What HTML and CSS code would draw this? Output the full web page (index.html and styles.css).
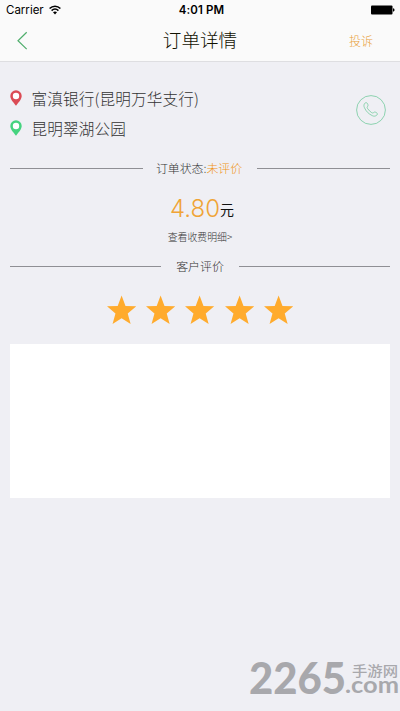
FILE: index.html
```html
<!DOCTYPE html>
<html lang="zh-CN">
<head>
<meta charset="utf-8">
<title>订单详情</title>
<link rel="stylesheet" href="styles.css">
</head>
<body>
<div class="screen">
  <header class="header">
    <div class="status">
      <div class="carrier"><span>Carrier</span>
        <svg width="12" height="10" viewBox="0 0 12 10" fill="none" stroke="#000" stroke-width="1.6"><path d="M.6 3.500C3.700.4 8.300.4 11.400 3.500M2.600 5.600c2-1.900 4.800-1.900 6.800 0"/><path d="M4 7.300c1.200-1 2.800-1 4 0L6 9.400z" fill="#000" stroke="none"/></svg>
      </div>
      <div class="clock">4:01 PM</div>
      <svg class="battery" width="24" height="10" viewBox="0 0 24 10"><rect x="0" y=".5" width="21.500" height="9" rx="1"/><path d="M22 3.300q1.600.3 1.600 1.700T22 6.700z"/></svg>
    </div>
    <nav class="nav">
      <svg class="back" width="12" height="20" viewBox="0 0 12 20" fill="none" stroke="#4fae6c" stroke-width="1.2"><path d="M9.700 1.200 1 9.700l8.700 8.400"/></svg>
      <h1 class="title">订单详情</h1>
      <span class="complain">投诉</span>
    </nav>
  </header>
  <main class="main">
    <section class="route">
      <div class="places">
        <div class="place"><svg class="pin pin-from" width="12" height="16" viewBox="0 0 12 16"><path d="M6 .3a5.700 5.700 0 0 1 5.700 5.700C11.700 9.500 8 13 6 15.700 4 13 .3 9.500.3 6A5.700 5.700 0 0 1 6 .3Z"/><circle cx="6" cy="6" r="3.200" fill="#fff"/></svg><span>富滇银行(昆明万华支行)</span></div>
        <div class="place"><svg class="pin pin-to" width="12" height="16" viewBox="0 0 12 16"><path d="M6 .3a5.700 5.700 0 0 1 5.700 5.700C11.700 9.500 8 13 6 15.700 4 13 .3 9.500.3 6A5.700 5.700 0 0 1 6 .3Z"/><circle cx="6" cy="6" r="3.200" fill="#fff"/></svg><span>昆明翠湖公园</span></div>
      </div>
      <svg class="call" width="30" height="30" viewBox="0 0 30 30" fill="none" stroke="#63c592" stroke-width=".7"><circle cx="15" cy="15" r="14.400"/><path d="M8.800 8.300c1-1 2.100-.7 2.600.2.700 1.200.9 2.200.1 3.100-.6.700-.4 1.300.2 2.100 1.200 1.700 2.200 2.700 3.800 3.800.8.600 1.500.7 2.100.1.900-.9 1.800-.6 2.900.1 1 .6 1.200 1.600.3 2.400-1.200 1.100-2.700 1.400-4.200.7-4-1.800-6.500-4.400-8.200-8.200-.7-1.500-.6-3.200.4-4.300Z"/></svg>
    </section>
    <div class="divider divider-status"><i></i><span>订单状态:<b>未评价</b></span><i></i></div>
    <div class="price"><span class="amount">4.80</span><span class="unit">元</span></div>
    <div class="detail">查看收费明细&gt;</div>
    <div class="divider divider-review"><i></i><span>客户评价</span><i></i></div>
    <div class="stars">
      <svg class="star" viewBox="0 0 30 30"><path d="M15 0l4 10.900 11 .3-8.700 7.300 3 11L15 23.400 5.700 29.500l3-11L0 11.200l11-.3z"/></svg>
      <svg class="star" viewBox="0 0 30 30"><path d="M15 0l4 10.900 11 .3-8.700 7.300 3 11L15 23.400 5.700 29.500l3-11L0 11.200l11-.3z"/></svg>
      <svg class="star" viewBox="0 0 30 30"><path d="M15 0l4 10.900 11 .3-8.700 7.300 3 11L15 23.400 5.700 29.500l3-11L0 11.200l11-.3z"/></svg>
      <svg class="star" viewBox="0 0 30 30"><path d="M15 0l4 10.900 11 .3-8.700 7.300 3 11L15 23.400 5.700 29.500l3-11L0 11.200l11-.3z"/></svg>
      <svg class="star" viewBox="0 0 30 30"><path d="M15 0l4 10.900 11 .3-8.700 7.300 3 11L15 23.400 5.700 29.500l3-11L0 11.200l11-.3z"/></svg>
    </div>
    <div class="comment"></div>
  </main>
  <svg class="mark" width="152" height="61" viewBox="0 0 152 61">
    <text class="mark-num" x="1" y="43.500" textLength="97" lengthAdjust="spacingAndGlyphs">2265</text>
    <text class="mark-cn" x="104" y="26" textLength="46" lengthAdjust="spacingAndGlyphs">手游网</text>
    <text class="mark-com" x="97" y="43" textLength="54" lengthAdjust="spacingAndGlyphs">.com</text>
  </svg>
</div>
</body>
</html>
```

FILE: styles.css
```css
* { box-sizing: border-box; }
body { margin: 0; font-family: "Noto Sans CJK SC", sans-serif; font-weight: 300; }
.screen { position: relative; width: 400px; height: 711px; overflow: hidden; background: #efeff4; color: #333; }
svg { display: block; flex: none; }

.header { height: 62px; background: #fafafa; border-bottom: 1px solid #dedee1; }
.status { display: grid; grid-template-columns: 1fr auto 1fr; align-items: center; height: 20px; padding: 0 5px 0 6px; font-family: Inter, sans-serif; font-size: 11.500px; color: #000; }
.carrier { display: flex; align-items: center; gap: 5px; font-weight: 400; }
.clock { margin-left: 2px; font-weight: 600; letter-spacing: .1px; }
.battery { justify-self: end; }
.nav { display: grid; grid-template-columns: 1fr auto 1fr; align-items: center; height: 41px; padding: 0 27px 0 17px; }
.title { margin: -4px 0 0 10px; font-size: 18.600px; line-height: 38px; font-weight: 300; color: #111100; }
.complain { justify-self: end; font-size: 12px; color: #e9a138; }

.main { padding: 0 10px; }
.route { display: flex; justify-content: space-between; align-items: center; height: 92px; padding: 4px 4px 0 0; }
.places { display: flex; flex-direction: column; margin-top: 6px; }
.place { display: flex; align-items: center; gap: 10px; height: 30px; font-size: 15.600px; line-height: 30px; }
.place span { margin-top: -1px; letter-spacing: .15px; }
.pin { margin: 0 0 0 -.5px; }
.pin-from { fill: #db4b55; }
.pin-to { fill: #45d37f; }

.divider { display: flex; align-items: center; font-size: 11.900px; line-height: 20px; }
.divider i { flex: 1; height: 1px; background: #8f8f94; }
.divider b { font-weight: 300; color: #f09418; }
.divider-status { margin-top: 4px; }
.divider-status span { margin: 0 15px 0 13px; }
.divider-review { margin-top: 9px; }
.divider-review span { margin: 0 15px 0 15px; }
.price { display: flex; justify-content: center; align-items: baseline; height: 38px; margin-top: 12px; line-height: 38px; padding-left: 4px; }
.amount { font-family: Inter, sans-serif; font-size: 24px; color: #f0a436; }
.unit { position: relative; top: -2px; font-size: 14px; font-weight: 400; color: #111; }
.detail { margin-top: -1px; font-size: 9.900px; line-height: 20px; text-align: center; }
.stars { display: flex; justify-content: center; gap: 10px; margin-top: 19px; }
.star { width: 29.200px; height: 30px; fill: #ffab2d; }
.comment { height: 154px; margin-top: 19px; background: #fff; }

.mark { position: absolute; left: 248px; top: 650px; fill: #a8a8ac; }
.mark-num { font: 900 43px Lato, sans-serif; }
.mark-cn { font: 500 14px "Noto Sans CJK SC", sans-serif; }
.mark-com { font: 700 22px Lato, sans-serif; }
```
